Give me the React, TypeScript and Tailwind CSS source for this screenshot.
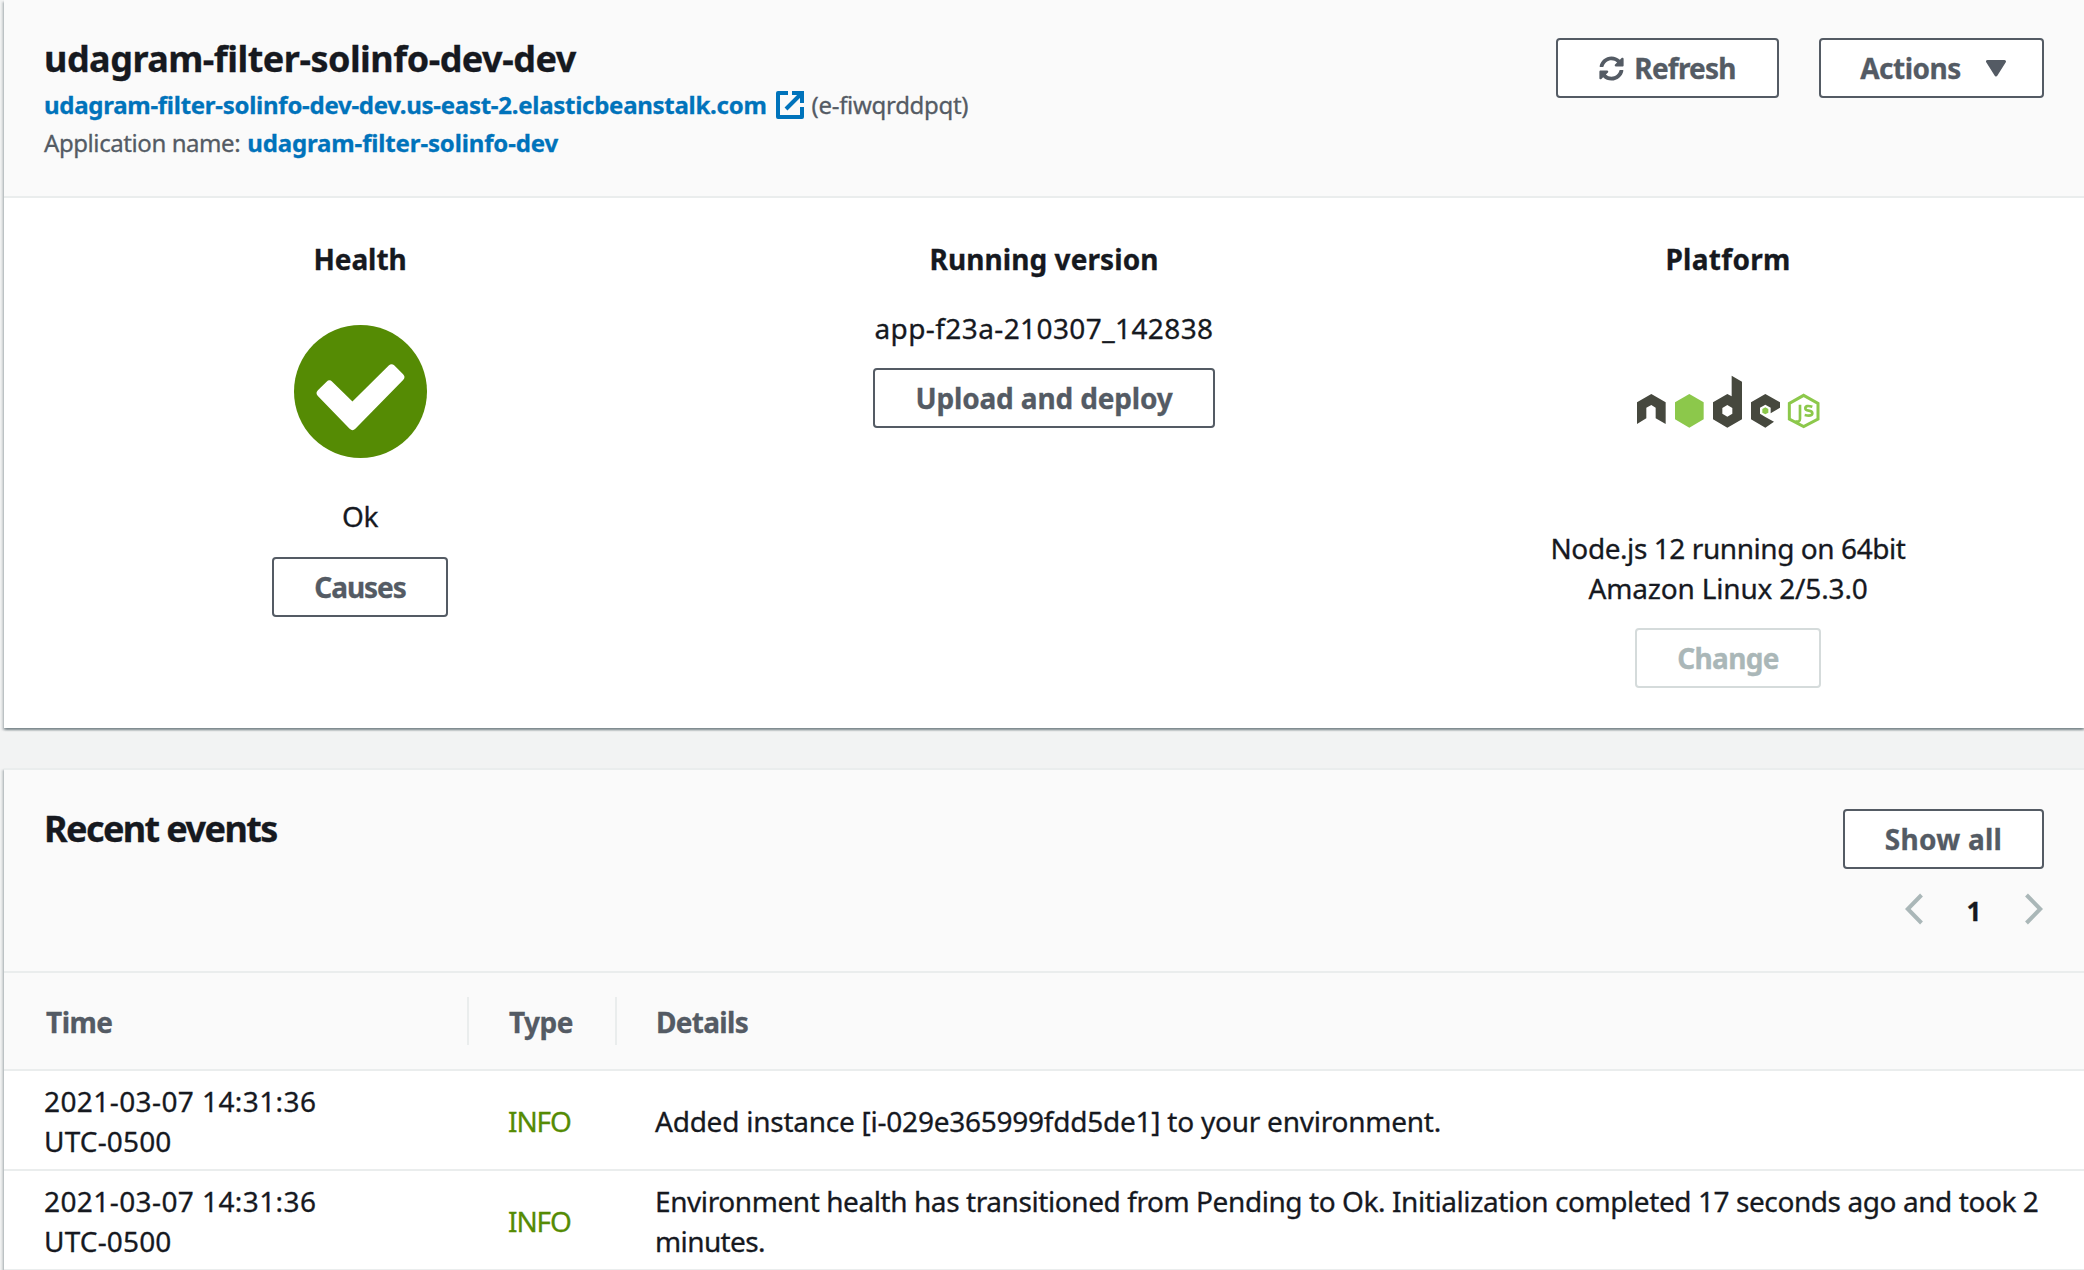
import type { ReactNode } from "react";
import { FaSyncAlt } from "react-icons/fa";

function Button({ className = "", disabled = false, children }: { className?: string; disabled?: boolean; children: ReactNode }) {
  const tone = disabled ? "border-[#d5dbdb] text-[#aab7b8]" : "border-[#545b64] text-[#545b64]";
  return (
    <button
      disabled={disabled}
      className={`flex h-[60px] shrink-0 items-center justify-center whitespace-nowrap rounded-[4px] border-2 bg-white text-[28px] font-bold leading-[40px] ${tone} ${className}`}
    >
      {children}
    </button>
  );
}

function ExternalIcon() {
  return (
    <svg className="ml-[9px] mr-2 size-7 shrink-0" viewBox="0 0 28 28" fill="none" stroke="#0073bb" strokeWidth="4">
      <path d="M12 2H2V26H26V16" strokeLinejoin="round" />
      <path d="M16 2H26V12" />
      <path d="M25 3L10 18" />
    </svg>
  );
}

function HealthIcon() {
  return (
    <svg className="size-[133px]" viewBox="102 286 398 398">
      <circle cx="301" cy="485" r="199" fill="#558b04" />
      <path
        d="M182 490L208 464L277 532L394 416L420 442L277 588Z"
        fill="#fff"
        stroke="#fff"
        strokeWidth="24"
        strokeLinejoin="round"
      />
    </svg>
  );
}

function NodeLogo() {
  return (
    <svg className="h-[54px] w-[183px] blur-[0.6px]" viewBox="51 45 549 162">
      <g fill="#46483e">
        <path d="M51 127L94 102L137 127V192L107 175V143L94 135L79 143V175L51 192Z" />
        <path
          fillRule="evenodd"
          d="M335 47L366 65V178L322 203L279 178V127L322 102L335 109ZM322 135L307 144V161L322 170L337 161V144Z"
        />
        <path d="M436 102L480 127V143L452 160V143L436 134L420 143V161L436 171L462 185L436 203L393 178V127Z" />
      </g>
      <path d="M208 102L251 127V178L208 203L165 178V127Z" fill="#8cc84b" />
      <path d="M436 142L445 147V158L436 163L427 158V147Z" fill="#8cc84b" />
      <g fill="none" stroke="#8cc84b">
        <path d="M551 106L594 130V177L551 200L508 177V130Z" strokeWidth="9" />
        <path d="M540 134V176Q540 188 526 184" strokeWidth="8" />
        <path d="M577 140Q556 134 556 145Q556 151 566 152Q577 153 577 160Q577 170 554 165" strokeWidth="8" />
      </g>
    </svg>
  );
}

function Chevron({ flip = false }: { flip?: boolean }) {
  return (
    <svg className={flip ? "h-8 w-[18px] -scale-x-100" : "h-8 w-[18px]"} viewBox="0 0 18 32" fill="none" stroke="#aab7b8" strokeWidth="4">
      <path d="M16.5 2L2.8 16L16.5 30" />
    </svg>
  );
}

const events = [
  {
    time: "2021-03-07 14:31:36",
    zone: "UTC-0500",
    type: "INFO",
    details: [{ text: "Added instance [i-029e365999fdd5de1] to your environment.", tracking: "tracking-[-0.24px]" }],
  },
  {
    time: "2021-03-07 14:31:36",
    zone: "UTC-0500",
    type: "INFO",
    details: [
      {
        text: "Environment health has transitioned from Pending to Ok. Initialization completed 17 seconds ago and took 2",
        tracking: "tracking-[-0.42px]",
      },
      { text: "minutes.", tracking: "tracking-[-0.6px]" },
    ],
  },
];

const cardShadow =
  "shadow-[0_2px_2px_0_rgba(0,28,36,0.3),2px_2px_2px_0_rgba(0,28,36,0.15),-2px_2px_2px_0_rgba(0,28,36,0.15)]";

export default function App() {
  return (
    <div className="flex h-[1270px] w-[2084px] flex-col gap-10 overflow-hidden bg-[#f2f3f3] pl-1 font-['Noto_Sans',sans-serif] text-[28px] leading-[40px] text-[#16191f] [-webkit-text-stroke:0.3px]">
      <section className={`h-[728px] shrink-0 bg-white ${cardShadow}`}>
        <header className="flex h-[198px] justify-between border-b-2 border-[#eaeded] bg-[#fafafa] pl-10 pr-10">
          <div className="whitespace-nowrap pt-[37px] text-[24px] leading-[38px] text-[#545b64]">
            <h1 className="mb-[5px] text-[36px] font-bold leading-[44px] tracking-[-0.52px] text-[#16191f]">udagram-filter-solinfo-dev-dev</h1>
            <div className="flex items-center">
              <a className="font-bold tracking-[-0.27px] text-[#0073bb]">udagram-filter-solinfo-dev-dev.us-east-2.elasticbeanstalk.com</a>
              <ExternalIcon />
              <span className="tracking-[-0.3px]">(e-fiwqrddpqt)</span>
            </div>
            <div className="flex gap-[7px]">
              <span className="tracking-[-0.42px]">Application name:</span>
              <a className="font-bold tracking-[-0.14px] text-[#0073bb]">udagram-filter-solinfo-dev</a>
            </div>
          </div>
          <div className="flex gap-10 pt-[38px]">
            <Button className="w-[223px] gap-[10px]">
              <FaSyncAlt className="size-[25px]" />
              <span className="tracking-[-0.78px]">Refresh</span>
            </Button>
            <Button className="w-[225px] gap-[25px] pl-[3px]">
              <span className="tracking-[-0.5px]">Actions</span>
              <svg className="h-[17px] w-5" viewBox="0 0 20 17" fill="#545b64" stroke="#545b64" strokeWidth="3" strokeLinejoin="round">
                <path d="M1.5 1.5H18.5L10 15Z" />
              </svg>
            </Button>
          </div>
        </header>

        <div className="grid grid-cols-3 px-[14px] pt-[39px] text-center">
          <div className="flex flex-col items-center">
            <h2 className="font-bold leading-[44px] tracking-[-0.06px]">Health</h2>
            <div className="mt-11">
              <HealthIcon />
            </div>
            <p className="mt-[38px] tracking-[-0.5px]">Ok</p>
            <Button className="mt-[21px] w-44 tracking-[-1.05px]">Causes</Button>
          </div>
          <div className="flex flex-col items-center whitespace-nowrap">
            <h2 className="font-bold leading-[44px] tracking-[0.08px]">Running version</h2>
            <p className="mt-[27px] tracking-[0.4px]">app-f23a-210307_142838</p>
            <Button className="mt-5 w-[342px] tracking-[-0.15px]">Upload and deploy</Button>
          </div>
          <div className="flex flex-col items-center whitespace-nowrap">
            <h2 className="font-bold leading-[44px] tracking-[0.3px]">Platform</h2>
            <div className="mt-[94px] h-[54px]">
              <NodeLogo />
            </div>
            <p className="mt-[99px] tracking-[-0.43px]">Node.js 12 running on 64bit</p>
            <p className="tracking-[-0.17px]">Amazon Linux 2/5.3.0</p>
            <Button disabled className="mt-5 w-[186px] tracking-[-0.7px]">Change</Button>
          </div>
        </div>
      </section>

      <section className={`h-[520px] shrink-0 border-t-2 border-[#eaeded] bg-white ${cardShadow}`}>
        <header className="flex h-[203px] justify-between border-b-2 border-[#eaeded] bg-[#fafafa] pl-10 pr-10">
          <h2 className="pt-[37px] text-[36px] font-bold leading-[44px] tracking-[-1.6px]">Recent events</h2>
          <div className="flex flex-col items-end pt-[39px]">
            <Button className="w-[201px] tracking-[0.25px]">Show all</Button>
            <div className="mr-px mt-5 flex h-10 items-center">
              <Chevron />
              <span className="w-[102px] pt-1 text-center text-[26px] font-bold">1</span>
              <Chevron flip />
            </div>
          </div>
        </header>

        <div className="flex h-[98px] items-center border-b-2 border-[#eaeded] bg-[#fafafa] font-bold text-[#545b64]">
          <div className="flex h-12 w-[465px] items-center border-r-2 border-[#eaeded] pl-[42px] pt-px tracking-[-0.5px]">Time</div>
          <div className="flex h-12 w-[148px] items-center border-r-2 border-[#eaeded] pl-10 pt-px tracking-[-0.5px]">Type</div>
          <div className="pl-[39px] pt-px tracking-[-0.7px]">Details</div>
        </div>

        {events.map((event, index) => (
          <div key={index} className="flex h-[100px] items-center border-b-2 border-[#eaeded] pt-[2px]">
            <div className="w-[465px] pl-10">
              <p className="tracking-[0.41px]">{event.time}</p>
              <p className="tracking-[0.16px]">{event.zone}</p>
            </div>
            <div className="w-[148px] pl-[39px] tracking-[-1.1px] text-[#558b04]">{event.type}</div>
            <div className="whitespace-nowrap pl-[38px]">
              {event.details.map((line) => (
                <p key={line.text} className={line.tracking}>{line.text}</p>
              ))}
            </div>
          </div>
        ))}
      </section>
    </div>
  );
}
